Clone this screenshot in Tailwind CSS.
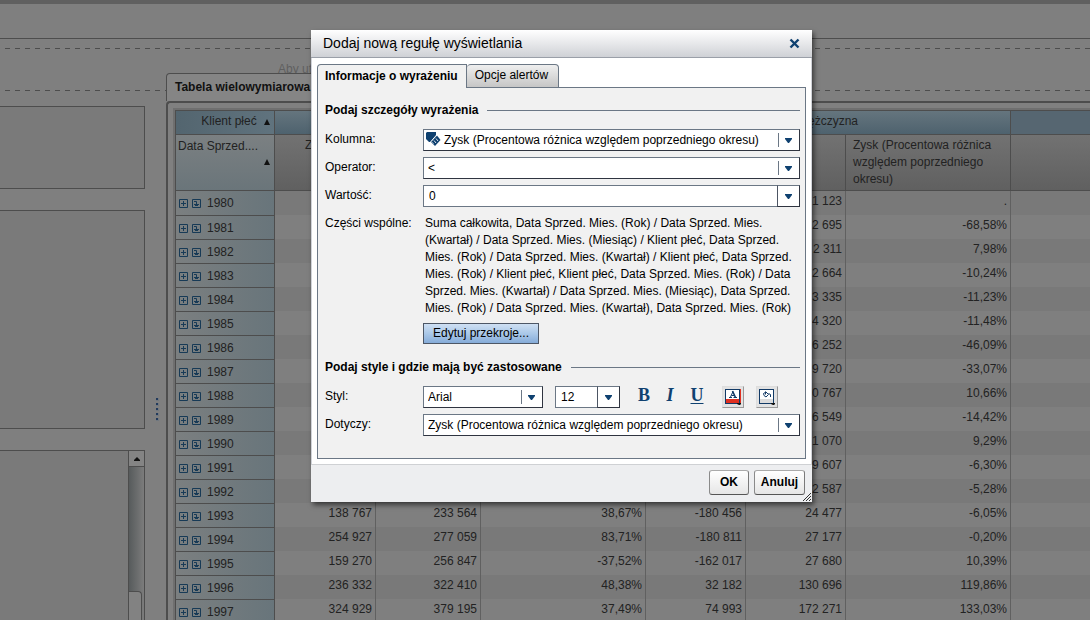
<!DOCTYPE html>
<html lang="pl">
<head>
<meta charset="utf-8">
<title>Dodaj nową regułę wyświetlania</title>
<script src="https://cdn.jsdelivr.net/npm/@tailwindcss/browser@4"></script>
</head>
<body class="relative h-screen overflow-hidden bg-[#7f7f7f] font-['Liberation_Sans',Arial,sans-serif] text-[12px] leading-[17px] text-[#222222]">

<svg class="hidden" aria-hidden="true">
  <symbol id="expand" viewBox="0 0 9 9"><path d="M.5.5h8v8h-8zM2 4.5h5M4.5 2v5" fill="none" stroke="#173a56"/></symbol>
  <symbol id="drill" viewBox="0 0 9 9"><path d="M.5.5h8v8h-8zM2 2.500h2.500v3" fill="none" stroke="#173a56"/><path d="M2 5h5v1H6v1H3V6H2z" fill="#173a56"/></symbol>
  <symbol id="down" viewBox="0 0 7 5"><path d="M0 0h7v1L4 5H3L0 1z" fill="#0f4170"/></symbol>
</svg>

<!-- Application page, dimmed while the dialog is open -->
<div class="flex h-full flex-col">
  <header class="h-[39px] shrink-0 border-t-4 border-b border-t-[#606060] border-b-[#4d4d4d]"></header>
  <section class="mt-[9px] flex h-[43px] shrink-0 flex-col justify-between pl-[5px]">
    <div class="h-px bg-[repeating-linear-gradient(90deg,#4d4d4d_0_5px,transparent_5px_10px)]"></div>
    <p class="pl-[273px] text-[#5f5f5f]">Aby ut</p>
    <div class="h-px bg-[repeating-linear-gradient(90deg,#4d4d4d_0_5px,transparent_5px_10px)]"></div>
  </section>

  <div class="-mt-[18px] flex min-h-0 flex-1">
    <aside class="flex w-[145px] shrink-0 flex-col gap-[21px] pt-[33px]">
      <div class="h-[83px] shrink-0 border border-l-0 border-[#4d4d4d] bg-[#7a7a7a]"></div>
      <div class="h-[219px] shrink-0 border border-l-0 border-[#4d4d4d] bg-[#7a7a7a]"></div>
      <div class="flex flex-1 justify-end border border-b-0 border-l-0 border-[#4d4d4d] bg-[#7a7a7a]">
        <div class="flex w-[16px] flex-col border-l border-[#4d4d4d] bg-gradient-to-r from-[#575b5c] to-[#7c7c7c]">
          <button aria-label="Przewiń w górę" class="flex h-[16px] items-center justify-center border-b border-[#4d4d4d] bg-[#848484]"><svg class="h-[4px] w-[6px]" viewBox="0 0 6 4"><path d="M3 0 6 3v1H0V3z" fill="#111"/></svg></button>
          <div class="mt-[124px] mr-[2px] flex-1 rounded-tr border-t border-r border-[#4d4d4d] bg-[#828282]"></div>
        </div>
      </div>
    </aside>
    <div class="flex w-[21px] shrink-0 justify-center pt-[325px] pl-[3px]">
      <svg class="h-[23px] w-[3px]" viewBox="0 0 3 23"><path d="M0 0h3v3H0zM0 5h3v3H0zM0 10h3v3H0zM0 15h3v3H0zM0 20h3v3H0z" fill="#6f7780"/><path d="M0 0h2v2H0zM0 5h2v2H0zM0 10h2v2H0zM0 15h2v2H0zM0 20h2v2H0z" fill="#223a5c"/></svg>
    </div>
    <main class="flex min-w-0 flex-1 flex-col">
      <h2 class="relative h-[28px] w-[240px] shrink-0 rounded-tl border border-b-0 border-[#4d4d4d] bg-[#858585] pt-[5px] pl-2 text-[12px] font-bold text-[#111111]">Tabela wielowymiarowa</h2>
      <div class="min-h-0 flex-1 overflow-hidden rounded-tl border-t-2 border-l-2 border-[#4d4d4d] bg-[#808080] pt-[5px] pl-[5px]">
        <div class="border-t-2 border-l-2 border-[#6f6f6f]">
          <table class="w-full table-fixed border-separate border-spacing-0 border-t border-l border-[#4d4d4d]">
            <colgroup><col class="w-[99px]"><col class="w-[101px]"><col class="w-[105px]"><col class="w-[165px]"><col class="w-[100px]"><col class="w-[100px]"><col class="w-[165px]"><col></colgroup>
            <thead class="text-left align-top">
              <tr class="h-[24px]">
                <th class="border-r border-b border-[#4d4d4d] bg-gradient-to-r from-[#53656f] to-[#60737e] p-0 pt-[2px] pr-1 text-right font-normal whitespace-nowrap">Klient płeć <span class="inline-block w-[10px] text-right align-middle"><svg class="inline h-[6px] w-[6px] align-middle" viewBox="0 0 6 6"><path d="M3 0 6 6H0z" fill="#111"/></svg></span></th>
                <th colspan="3" class="border-r border-b border-[#4d4d4d] bg-gradient-to-b from-[#65757e] to-[#4e626e] p-0 font-normal"></th>
                <th colspan="3" class="border-r border-b border-[#4d4d4d] bg-gradient-to-b from-[#65757e] to-[#4e626e] p-0 pt-[2px] text-center font-normal">Mężczyzna</th>
                <th class="border-b border-[#4d4d4d] bg-[#566671] p-0"></th>
              </tr>
              <tr class="h-[56px]">
                <th class="border-r border-b border-[#4d4d4d] bg-gradient-to-b from-[#7b8082] to-[#6a757a] pt-[3px] pl-[2px] align-top font-normal">Data Sprzed....<svg class="mt-[4px] mr-1 ml-auto h-[6px] w-[6px]" viewBox="0 0 6 6"><path d="M3 0 6 6H0z" fill="#111"/></svg></th>
                <th class="border-r border-b border-[#4d4d4d] bg-gradient-to-b from-[#727272] to-[#606060] pt-[2px] pl-[30px] align-top font-normal">Z</th>
                <th class="border-r border-b border-[#4d4d4d] bg-gradient-to-b from-[#727272] to-[#606060]"></th>
                <th class="border-r border-b border-[#4d4d4d] bg-gradient-to-b from-[#727272] to-[#606060]"></th>
                <th class="border-r border-b border-[#4d4d4d] bg-gradient-to-b from-[#727272] to-[#606060]"></th>
                <th class="border-r border-b border-[#4d4d4d] bg-gradient-to-b from-[#727272] to-[#606060]"></th>
                <th class="border-r border-b border-[#4d4d4d] bg-gradient-to-b from-[#727272] to-[#606060] pt-[2px] pl-[7px] align-top font-normal">Zysk (Procentowa różnica względem poprzedniego okresu)</th>
                <th class="border-b border-[#4d4d4d] bg-gradient-to-b from-[#727272] to-[#606060]"></th>
              </tr>
            </thead>
            <tbody id="rows"></tbody>
          </table>
        </div>
      </div>
    </main>
  </div>
</div>

<!-- Dialog window -->
<div role="dialog" aria-labelledby="dlg-title" class="absolute top-[30px] left-[311px] flex w-[501px] flex-col bg-white text-black shadow-[2px_3px_5px_rgba(0,0,0,0.55)]">
  <div class="flex h-[28px] items-center justify-between border-b border-[#9a9fa8] bg-gradient-to-b from-white to-[#cfd1d6] pr-3 pl-3">
    <h1 id="dlg-title" class="text-[14px]">Dodaj nową regułę wyświetlania</h1>
    <button aria-label="Zamknij"><svg class="h-[11px] w-[11px]" viewBox="0 0 11 11"><path d="M1.500 1.500 9.500 9.500M9.500 1.500 1.500 9.500" fill="none" stroke="#0f4170" stroke-width="2.400"/></svg></button>
  </div>

  <div class="border-x border-[#d0d2d8] px-[5px] pt-[6px] pb-[5px]">
    <div role="tablist" class="relative -mb-px flex h-[24px] items-stretch">
      <button role="tab" aria-selected="true" class="z-10 rounded-tl border border-b-0 border-[#6b7785] bg-[#f1f1f1] pr-2 pb-[1px] pl-[7px] font-bold">Informacje o wyrażeniu</button>
      <button role="tab" aria-selected="false" class="rounded-t border border-l-0 border-[#6b7785] bg-gradient-to-b from-[#efefef] to-[#c6c6c6] pr-[10px] pb-[1px] pl-2">Opcje alertów</button>
    </div>
    <form class="border border-[#6b7785] bg-[#f1f1f1] pr-[5px] pl-[7px]">
      <div class="mt-[13px] flex h-[18px] items-center gap-[9px]"><h2 class="font-bold">Podaj szczegóły wyrażenia</h2><span class="h-px flex-1 bg-[#6b7785]"></span></div>

      <div class="mt-[10px] grid grid-cols-[98px_1fr] gap-y-[6px]">
        <label for="col" class="pt-[2px]">Kolumna:</label>
        <div class="relative flex">
          <select id="col" class="h-[22px] w-full appearance-none border border-t-[#6b7785] border-r-[#2f3440] border-b-[#2f3440] border-l-[#6b7785] bg-white pl-5"><option>Zysk (Procentowa różnica względem poprzedniego okresu)</option></select>
          <svg class="pointer-events-none absolute top-[3px] left-[3px] h-[15px] w-[15px]" viewBox="0 0 15 15"><path d="M1 0h9v4L5 10H3L0 7V1z" fill="#0f4170"/><path d="M11 3.500 14.500 8 9 14 5 10z" fill="#0f4170"/><path d="M11 2.500 4.500 10" stroke="#fff" stroke-width="1"/><path d="M8 8.500l2 2.500M10 6.500l2 2.500M6.500 10.500l1 1" stroke="#dfe6ee" stroke-width="1"/></svg>
          <span class="pointer-events-none absolute inset-y-1 right-[21px] w-px bg-[#6b7785]"></span>
          <svg class="pointer-events-none absolute top-[9px] right-[8px] h-[5px] w-[7px]"><use href="#down"/></svg>
        </div>

        <label for="op" class="pt-[2px]">Operator:</label>
        <div class="relative flex">
          <select id="op" class="h-[22px] w-full appearance-none border border-t-[#6b7785] border-r-[#2f3440] border-b-[#2f3440] border-l-[#6b7785] bg-white pl-[4px]"><option>&lt;</option></select>
          <span class="pointer-events-none absolute inset-y-1 right-[21px] w-px bg-[#6b7785]"></span>
          <svg class="pointer-events-none absolute top-[9px] right-[8px] h-[5px] w-[7px]"><use href="#down"/></svg>
        </div>

        <label for="val" class="pt-[2px]">Wartość:</label>
        <div class="flex h-[22px]">
          <input id="val" type="text" value="0" class="min-w-0 flex-1 border border-r-0 border-[#6b7785] bg-white pl-[5px]">
          <button type="button" aria-label="Wybierz wartość" class="flex w-[23px] items-center justify-center border border-t-[#6b7785] border-r-[#2f3440] border-b-[#2f3440] border-l-[#4c5563] bg-white"><svg class="h-[5px] w-[7px]"><use href="#down"/></svg></button>
        </div>

        <span class="pt-[2px]">Części wspólne:</span>
        <p class="pt-[2px] pl-[2px] whitespace-nowrap">Suma całkowita, Data Sprzed. Mies. (Rok) / Data Sprzed. Mies.<br>(Kwartał) / Data Sprzed. Mies. (Miesiąc) / Klient płeć, Data Sprzed.<br>Mies. (Rok) / Data Sprzed. Mies. (Kwartał) / Klient płeć, Data Sprzed.<br>Mies. (Rok) / Klient płeć, Klient płeć, Data Sprzed. Mies. (Rok) / Data<br>Sprzed. Mies. (Kwartał) / Data Sprzed. Mies. (Miesiąc), Data Sprzed.<br>Mies. (Rok) / Data Sprzed. Mies. (Kwartał), Data Sprzed. Mies. (Rok)</p>
        <button type="button" class="col-start-2 h-[21px] w-[116px] border border-[#4d5766] bg-gradient-to-b from-[#cfe0f3] via-[#aac8e8] to-[#86acd9]">Edytuj przekroje...</button>
      </div>

      <div class="mt-[14px] flex h-[18px] items-center gap-[9px]"><h2 class="font-bold">Podaj style i gdzie mają być zastosowane</h2><span class="h-px flex-1 bg-[#6b7785]"></span></div>

      <div class="mt-[10px] mb-[22px] grid grid-cols-[98px_1fr] gap-y-[6px]">
        <label for="font" class="pt-[2px]">Styl:</label>
        <div class="flex h-[22px] items-center">
          <div class="relative flex w-[120px]">
            <select id="font" class="h-[22px] w-full appearance-none border border-t-[#6b7785] border-r-[#2f3440] border-b-[#2f3440] border-l-[#6b7785] bg-white pl-[4px]"><option>Arial</option></select>
            <span class="pointer-events-none absolute inset-y-1 right-[21px] w-px bg-[#6b7785]"></span>
            <svg class="pointer-events-none absolute top-[9px] right-[8px] h-[5px] w-[7px]"><use href="#down"/></svg>
          </div>
          <div class="ml-3 flex h-[22px] w-[65px]">
            <input aria-label="Rozmiar" type="text" value="12" class="min-w-0 flex-1 border border-r-0 border-[#6b7785] bg-white pl-[5px]">
            <button type="button" aria-label="Wybierz rozmiar" class="flex w-[23px] items-center justify-center border border-t-[#6b7785] border-r-[#2f3440] border-b-[#2f3440] border-l-[#4c5563] bg-white"><svg class="h-[5px] w-[7px]"><use href="#down"/></svg></button>
          </div>
          <button type="button" aria-label="Pogrubienie" class="ml-[17px] w-[14px] pb-[3px] font-['Liberation_Serif',serif] text-[18px] font-bold text-[#0f4170]">B</button>
          <button type="button" aria-label="Kursywa" class="ml-3 w-[14px] pb-[3px] font-['Liberation_Serif',serif] text-[18px] font-bold text-[#0f4170] italic">I</button>
          <button type="button" aria-label="Podkreślenie" class="ml-3 w-[16px] pb-[3px] font-['Liberation_Serif',serif] text-[18px] font-bold text-[#0f4170] underline decoration-1 underline-offset-2">U</button>
          <button type="button" aria-label="Kolor tekstu" class="ml-[17px] flex h-[22px] w-[22px] items-center justify-center border border-t-[#dddddd] border-r-[#9a9a9a] border-b-[#9a9a9a] border-l-[#dddddd] bg-[#e2e2e2]"><svg class="h-[18px] w-[18px]" viewBox="0 0 18 18"><path d="M15 1h2v15h-2z" fill="#e03020"/><path d="M1 1h15v15H1z" fill="#123a66"/><path d="M2 2h13v9H2z" fill="#fff"/><path d="M2 11h13v4H2z" fill="#e03020"/><path d="M5 9.500h3M9.500 9.500h3.500M6.500 9 9 3.500M7.500 7.500h3" fill="none" stroke="#123a66"/><path d="M8.500 3 11.500 9.500" stroke="#123a66" stroke-width="1.600"/><path d="M13 15h4v1l-1 1h-1l-2-1z" fill="#111"/></svg></button>
          <button type="button" aria-label="Kolor tła" class="ml-3 flex h-[22px] w-[22px] items-center justify-center border border-t-[#dddddd] border-r-[#9a9a9a] border-b-[#9a9a9a] border-l-[#dddddd] bg-[#e2e2e2]"><svg class="h-[18px] w-[18px]" viewBox="0 0 18 18"><path d="M1 1h15v15H1z" fill="#123a66"/><path d="M2 2h13v9H2z" fill="#fff"/><path d="M2 11h13v4H2z" fill="#dcdcdc"/><path d="M5.500 5.500 8 4l2.500 2.500L8 9 6 7.500zM7.500 3.500v3M10.500 5.500l2 1v2.500" fill="none" stroke="#123a66"/><path d="M13 15h4v1l-1 1h-1l-2-1z" fill="#111"/></svg></button>
        </div>

        <label for="applies" class="pt-[2px]">Dotyczy:</label>
        <div class="relative flex">
          <select id="applies" class="h-[22px] w-full appearance-none border border-t-[#6b7785] border-r-[#2f3440] border-b-[#2f3440] border-l-[#6b7785] bg-white pl-[4px]"><option>Zysk (Procentowa różnica względem poprzedniego okresu)</option></select>
          <span class="pointer-events-none absolute inset-y-1 right-[21px] w-px bg-[#6b7785]"></span>
          <svg class="pointer-events-none absolute top-[9px] right-[8px] h-[5px] w-[7px]"><use href="#down"/></svg>
        </div>
      </div>
    </form>
  </div>

  <div class="relative flex h-[38px] items-start justify-end gap-[5px] border-t border-[#cfd1d4] bg-[#edeef0] pt-[5px] pr-[7px] font-bold">
    <button class="h-[25px] w-[40px] rounded-[3px] border border-t-[#aaaaaa] border-r-[#7a7a7a] border-b-[#555555] border-l-[#8a8a8a] bg-gradient-to-b from-white to-[#e6e6e6] pb-[1px]">OK</button>
    <button class="h-[25px] w-[51px] rounded-[3px] border border-t-[#aaaaaa] border-r-[#7a7a7a] border-b-[#555555] border-l-[#8a8a8a] bg-gradient-to-b from-white to-[#e6e6e6] pb-[1px]">Anuluj</button>
    <svg class="absolute right-[1px] bottom-[1px] h-[8px] w-[8px]" viewBox="0 0 8 8"><path d="M0 8 8 0M3 8 8 3M6 8l2-2" stroke="#333" fill="none"/></svg>
  </div>
</div>

<script>
const data = [
  ["", "", "", "", "1 123", "."],
  ["", "", "", "", "2 695", "-68,58%"],
  ["", "", "", "", "2 311", "7,98%"],
  ["", "", "", "", "2 664", "-10,24%"],
  ["", "", "", "", "3 335", "-11,23%"],
  ["", "", "", "", "4 320", "-11,48%"],
  ["", "", "", "", "6 252", "-46,09%"],
  ["", "", "", "", "9 720", "-33,07%"],
  ["", "", "", "", "0 767", "10,66%"],
  ["", "", "", "", "6 549", "-14,42%"],
  ["", "", "", "", "1 070", "9,29%"],
  ["", "", "", "", "9 607", "-6,30%"],
  ["", "", "", "", "2 587", "-5,28%"],
  ["138 767", "233 564", "38,67%", "-180 456", "24 477", "-6,05%"],
  ["254 927", "277 059", "83,71%", "-180 811", "27 177", "-0,20%"],
  ["159 270", "256 847", "-37,52%", "-162 017", "27 680", "10,39%"],
  ["236 332", "322 410", "48,38%", "32 182", "130 696", "119,86%"],
  ["324 929", "379 195", "37,49%", "74 993", "172 271", "133,03%"]
];
document.getElementById("rows").innerHTML = data.map((r, i) =>
  `<tr class="h-[24px] odd:bg-[#797979] even:bg-[#7f7f7f]">
    <th class="${i ? "border-t pt-[2px]" : ""} border-r border-[#4d4d4d] bg-gradient-to-r from-[#7b7f80] to-[#68757b] px-0 pb-0 font-normal"><div class="flex items-center gap-[4px] pl-[3px]"><svg class="h-[9px] w-[9px]"><use href="#expand"/></svg><svg class="h-[9px] w-[9px]"><use href="#drill"/></svg><span class="pl-[2px]">${1980 + i}</span></div></th>
    ${r.map(v => `<td class="border-r border-[#606060] p-0 pr-[3px] pb-[4px] text-right">${v}</td>`).join("")}
    <td></td>
  </tr>`).join("");
</script>
</body>
</html>
